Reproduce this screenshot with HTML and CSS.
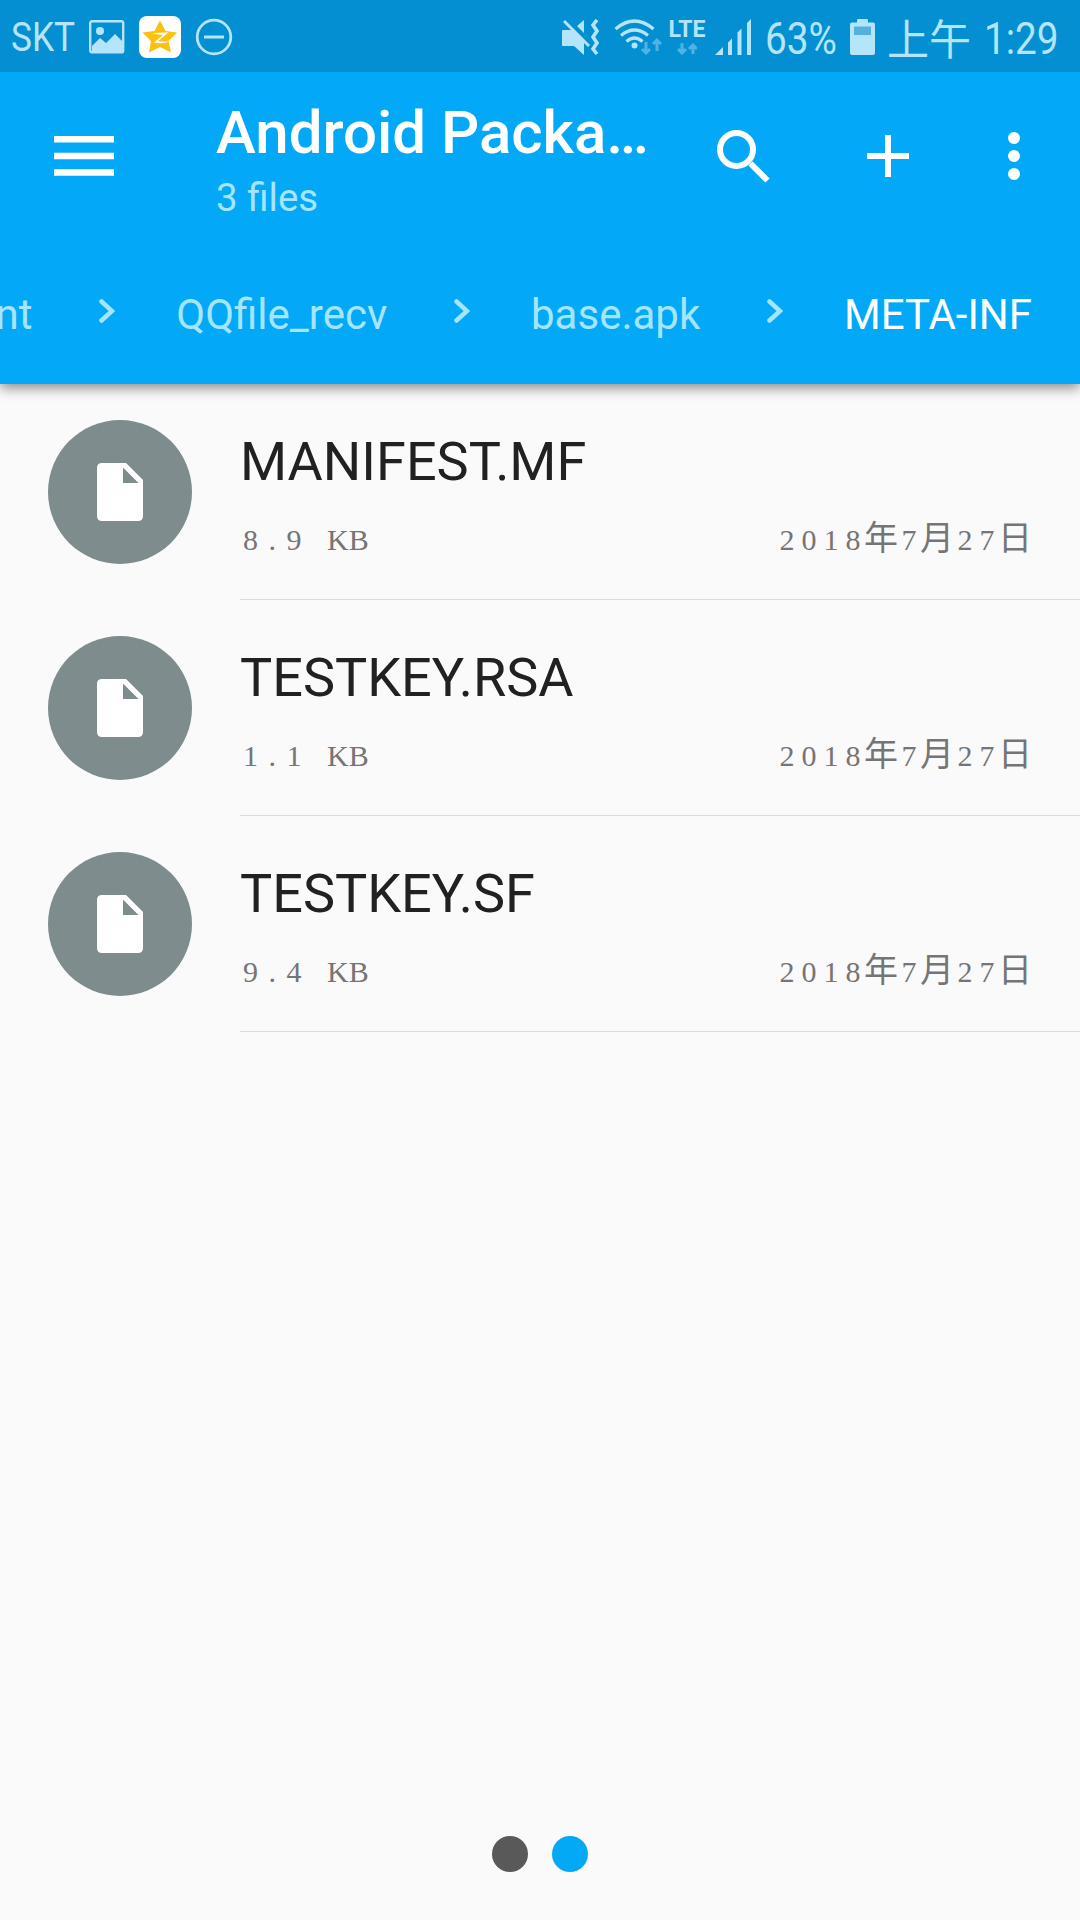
FILE: index.html
```html
<!DOCTYPE html>
<html lang="zh">
<head>
    <meta charset="UTF-8">
    <meta name="viewport" content="width=device-width, initial-scale=1.0">
    <title>META-INF</title>
    <link rel="stylesheet" href="styles.css">
</head>
<body>
    <div class="status-bar">
        <div class="carrier"><span class="condensed">SKT</span></div>
        <svg class="status-image" width="36" height="34" viewBox="0 0 36 34">
            <rect x="1.2" y="1.2" width="33" height="31.2" rx="2" fill="none" stroke="currentColor" stroke-width="2.4"/>
            <circle cx="11" cy="11" r="4" fill="currentColor"/>
            <path d="M3 26l8-8 6 5 9-9 8 8v10H3z" fill="currentColor"/>
        </svg>
        <svg class="status-star" width="42" height="42" viewBox="0 0 42 42">
            <rect width="42" height="42" rx="8" fill="#fff"/>
            <path d="M21 4.500l5.500 10.500 11.500 1.500-8.500 8.500 2.500 11.500-11-5.500-11 5.500 2-11.500-8.500-8.500 12-1.500z" fill="#fcc010"/>
            <path d="M13.500 17.500q8-1.500 16-1l-10.500 8.500q6 1 12.500 0-7 3.500-16.500 1.500l9-7.500q-5-.5-10.500-1.500z" fill="#fff"/>
        </svg>
        <svg class="status-dnd" width="38" height="38" viewBox="0 0 38 38" fill="none" stroke="currentColor">
            <circle cx="19" cy="19" r="16.800" stroke-width="2.800"/>
            <path d="M9 19h20" stroke-width="3"/>
        </svg>

        <div class="status-right">
            <svg class="status-mute" width="38" height="37" viewBox="0 0 38 37">
                <path d="M2 11h10l11 11v14l-10-9H2q-1 0-1-1V12q0-1 1-1zM23 1v13l-7-7z" fill="currentColor"/>
                <path d="M3 2l25 25" stroke="currentColor" stroke-width="3"/>
                <path d="M36 1l-4 5 4 6-4 6 4 6-4 6 4 5" fill="none" stroke="currentColor" stroke-width="3.600"/>
            </svg>
            <svg class="status-wifi" width="48" height="37" viewBox="0 0 48 37">
                <g fill="none" stroke="currentColor" stroke-width="3.200">
                    <path d="M1.500 10q19-16 38 0"/>
                    <path d="M7 16.500q13.500-11 27 0"/>
                    <path d="M12.500 22.500q8-7 16 0"/>
                </g>
                <circle cx="20.500" cy="26.500" r="3" fill="currentColor"/>
                <path class="traffic" d="M32 23v11M28 30l4 4 4-4M43 32V21M39 25l4-4 4 4"/>
            </svg>
            <div class="network">
                <span>LTE</span>
                <svg width="20" height="12" viewBox="0 0 20 12">
                    <path class="traffic" d="M5 0v10M1 6l4 4 4-4M16 11V2M12 6l4-4 4 4"/>
                </svg>
            </div>
            <svg class="status-signal" width="36" height="36" viewBox="0 0 36 36" fill="currentColor">
                <path d="M0 36l8-8v8zM13 23.500l4-4V36h-4zM22.500 13.500l4-4V36h-4zM32 4l4-4v36h-4z"/>
            </svg>
            <div class="percent"><span class="condensed">63%</span></div>
            <svg class="status-battery" width="25" height="36" viewBox="0 0 25 36">
                <path d="M8 0h9q1 0 1 2v1.500h5q2 0 2 2V34q0 2-2 2H2q-2 0-2-2V5.500q0-2 2-2h5V2q0-2 1-2z" fill="currentColor"/>
                <path d="M4 7.500h17V16H4z" fill="#55b0dc"/>
            </svg>
            <div class="meridiem">上午</div>
            <div class="clock"><span class="condensed">1:29</span></div>
        </div>
    </div>

    <header class="app-bar">
        <div class="toolbar">
            <svg class="menu-icon" width="60" height="40" viewBox="0 0 60 40">
                <path d="M0 0h60v6.500H0zM0 16.700h60v6.500H0zM0 33.300h60v6.500H0z" fill="currentColor"/>
            </svg>
            <div class="heading">
                <h1>Android Packa…</h1>
                <p>3 files</p>
            </div>
            <svg class="search-icon" width="53" height="53" viewBox="0 0 53 53" fill="none" stroke="currentColor" stroke-width="6">
                <circle cx="19.500" cy="19.500" r="16.500"/>
                <path d="M33.500 33.500l17 17"/>
            </svg>
            <svg class="add-icon" width="42" height="42" viewBox="0 0 42 42">
                <path d="M18 0h6v18h18v6H24v18h-6V24H0v-6h18z" fill="currentColor"/>
            </svg>
            <svg class="more-icon" width="12" height="48" viewBox="0 0 12 48" fill="currentColor">
                <circle cx="6" cy="6" r="6"/>
                <circle cx="6" cy="24" r="6"/>
                <circle cx="6" cy="42" r="6"/>
            </svg>
        </div>
        <nav class="breadcrumb">
            <span>nt</span>
            <svg class="chevron" width="16" height="24" viewBox="0 0 16 24"><path d="M2.500 2.500l10.500 9.500-10.500 9.500"/></svg>
            <span>QQfile_recv</span>
            <svg class="chevron" width="16" height="24" viewBox="0 0 16 24"><path d="M2.500 2.500l10.500 9.500-10.500 9.500"/></svg>
            <span>base.apk</span>
            <svg class="chevron" width="16" height="24" viewBox="0 0 16 24"><path d="M2.500 2.500l10.500 9.500-10.500 9.500"/></svg>
            <span class="current">META-INF</span>
        </nav>
    </header>

    <main class="file-list">
        <div class="file">
            <div class="file-icon">
                <svg width="46" height="58" viewBox="0 0 46 58"><path d="M5 0h24l17 17v36q0 5-5 5H5q-5 0-5-5V5q0-5 5-5zM26 4.500V20h15.500z" fill="#fff" fill-rule="evenodd"/></svg>
            </div>
            <div class="file-body">
                <div class="file-name">MANIFEST.MF</div>
                <div class="file-meta">
                    <div class="size"><span>8.9</span>KB</div>
                    <div class="date">2018<span>年</span>7<span>月</span>27<span>日</span></div>
                </div>
            </div>
        </div>
        <div class="file">
            <div class="file-icon">
                <svg width="46" height="58" viewBox="0 0 46 58"><path d="M5 0h24l17 17v36q0 5-5 5H5q-5 0-5-5V5q0-5 5-5zM26 4.500V20h15.500z" fill="#fff" fill-rule="evenodd"/></svg>
            </div>
            <div class="file-body">
                <div class="file-name">TESTKEY.RSA</div>
                <div class="file-meta">
                    <div class="size"><span>1.1</span>KB</div>
                    <div class="date">2018<span>年</span>7<span>月</span>27<span>日</span></div>
                </div>
            </div>
        </div>
        <div class="file">
            <div class="file-icon">
                <svg width="46" height="58" viewBox="0 0 46 58"><path d="M5 0h24l17 17v36q0 5-5 5H5q-5 0-5-5V5q0-5 5-5zM26 4.500V20h15.500z" fill="#fff" fill-rule="evenodd"/></svg>
            </div>
            <div class="file-body">
                <div class="file-name">TESTKEY.SF</div>
                <div class="file-meta">
                    <div class="size"><span>9.4</span>KB</div>
                    <div class="date">2018<span>年</span>7<span>月</span>27<span>日</span></div>
                </div>
            </div>
        </div>
    </main>

    <div class="pager">
        <div class="pager-dot"></div>
        <div class="pager-dot active"></div>
    </div>
</body>
</html>
```
FILE: styles.css
```css
* {
    box-sizing: border-box;
}

body {
    margin: 0;
    width: 1080px;
    height: 1920px;
    display: flex;
    flex-direction: column;
    overflow: hidden;
    background: #fafafa;
    font-family: Roboto, "Noto Sans CJK SC", sans-serif;
}

svg {
    display: block;
    flex-shrink: 0;
}

/* Status bar */
.status-bar {
    height: 72px;
    flex-shrink: 0;
    z-index: 1;
    display: flex;
    align-items: center;
    padding: 2px 22px 0 11px;
    background: #038fd1;
    color: #b5e5fb;
    white-space: nowrap;
}

.condensed {
    display: inline-block;
    transform: scaleX(0.86);
    transform-origin: left center;
}

.carrier {
    width: 63px;
    font-size: 41px;
}

.status-image {
    margin-left: 15px;
}

.status-star {
    margin-left: 14px;
}

.status-dnd {
    margin-left: 14px;
}

.status-right {
    margin-left: auto;
    display: flex;
    align-items: center;
}

.status-wifi {
    margin-left: 15px;
}

.traffic {
    fill: none;
    stroke: #51b3e3;
    stroke-width: 3;
}

.network {
    width: 38px;
    height: 36px;
    margin-left: 6px;
    padding-top: 1px;
    display: flex;
    flex-direction: column;
    align-items: center;
    justify-content: space-between;
    font-size: 23px;
    line-height: 20px;
    font-weight: 700;
}

.status-signal {
    margin-left: 9px;
}

.percent {
    width: 70px;
    margin-left: 14px;
    padding-top: 3px;
    font-size: 45px;
}

.status-battery {
    margin-left: 15px;
}

.meridiem {
    width: 84px;
    margin-left: 12px;
    font-family: "Noto Sans CJK SC", sans-serif;
    font-size: 42px;
    font-weight: 400;
    line-height: 60px;
}

.clock {
    width: 74px;
    margin-left: 13px;
    padding-top: 3px;
    font-size: 45px;
}

/* App bar */
.app-bar {
    height: 312px;
    flex-shrink: 0;
    background: #03a9f6;
    color: #fff;
    box-shadow: 0 4px 12px rgba(0, 0, 0, 0.45);
}

.toolbar {
    height: 168px;
    display: flex;
    align-items: center;
    padding: 0 60px 0 54px;
}

.heading {
    width: 450px;
    margin-left: 102px;
    padding-top: 13px;
    white-space: nowrap;
}

.heading h1 {
    margin: 0;
    font-size: 60px;
    font-weight: 500;
    line-height: 70px;
}

.heading p {
    margin: 0;
    font-size: 38.5px;
    line-height: 60px;
    color: #a5e5fe;
}

.search-icon {
    margin-left: 51px;
}

.add-icon {
    margin-left: 97px;
}

.more-icon {
    margin-left: auto;
}

.breadcrumb {
    height: 144px;
    display: flex;
    align-items: center;
    justify-content: flex-end;
    padding: 4px 48px 0 0;
    font-size: 42px;
    color: #a5e5fe;
    white-space: nowrap;
}

.breadcrumb .current {
    color: #fff;
}

.chevron {
    margin: 0 61px 6px 66.8px;
    fill: none;
    stroke: currentColor;
    stroke-width: 4.5;
    stroke-linecap: round;
}

/* File list */
.file {
    height: 216px;
    display: flex;
    padding-left: 48px;
}

.file-icon {
    width: 144px;
    height: 144px;
    margin: 36px 48px 0 0;
    display: flex;
    align-items: center;
    justify-content: center;
    border-radius: 50%;
    background: #7f8c8d;
}

.file-body {
    flex: 1;
    padding: 46px 48px 0 0;
    border-bottom: 1px solid #dcdcdc;
}

.file-name {
    font-size: 54px;
    line-height: 64px;
    color: #212121;
}

.file-meta {
    display: flex;
    align-items: baseline;
    justify-content: space-between;
    padding-top: 18px;
    font-family: "Liberation Serif", "Noto Sans CJK SC", serif;
    font-size: 30px;
    line-height: 48px;
    color: #757575;
}

.size {
    padding-left: 3px;
}

.size span {
    margin-right: 15px;
    letter-spacing: 10.5px;
}

.date {
    letter-spacing: 7px;
}

.date span {
    margin: 0 3.5px 0 -3.5px;
    font-family: "Noto Sans CJK SC", sans-serif;
    font-size: 34px;
    letter-spacing: 0;
}

.date span:last-child {
    margin-right: 0;
}

/* Page indicator */
.pager {
    margin-top: auto;
    padding-bottom: 48px;
    display: flex;
    justify-content: center;
    gap: 24px;
}

.pager-dot {
    width: 36px;
    height: 36px;
    border-radius: 50%;
    background: #595959;
}

.pager-dot.active {
    background: #03a9f4;
}
```
